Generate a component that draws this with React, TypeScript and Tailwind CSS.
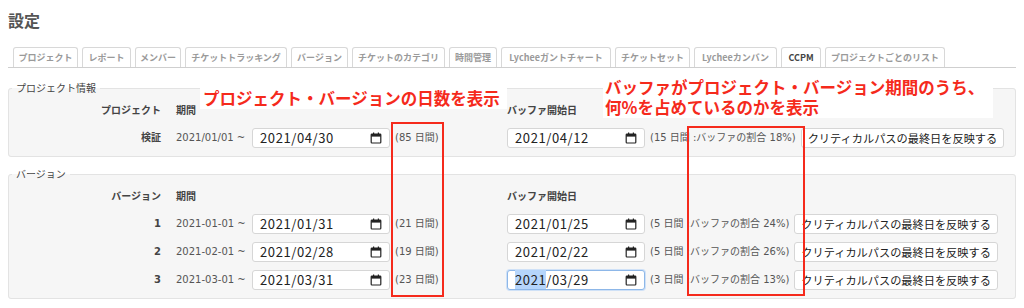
import React from "react";

const tabs = [
  { label: "プロジェクト", w: "w-[65px]" },
  { label: "レポート", w: "w-[49px]" },
  { label: "メンバー", w: "w-[46px]" },
  { label: "チケットトラッキング", w: "w-[102px]" },
  { label: "バージョン", w: "w-[57px]" },
  { label: "チケットのカテゴリ", w: "w-[93px]" },
  { label: "時間管理", w: "w-[48px]" },
  { label: "Lycheeガントチャート", w: "w-[110px]" },
  { label: "チケットセット", w: "w-[75px]" },
  { label: "Lycheeカンバン", w: "w-[83px]" },
  { label: "CCPM", w: "w-[40px]", active: true },
  { label: "プロジェクトごとのリスト", w: "w-[120px]" },
];

const versions = [
  { no: "1", from: "2021-01-01 ~", end: "2021/01/31", days: "(21 日間)", buf: "2021/01/25", ratio: "(5 日間 :バッファの割合 24%)" },
  { no: "2", from: "2021-02-01 ~", end: "2021/02/28", days: "(19 日間)", buf: "2021/02/22", ratio: "(5 日間 :バッファの割合 26%)" },
  { no: "3", from: "2021-03-01 ~", end: "2021/03/31", days: "(23 日間)", buf: "2021/03/29", ratio: "(3 日間 :バッファの割合 13%)", focused: true },
];

function CalendarIcon() {
  return (
    <svg width="12" height="12" viewBox="0 0 12 12" className="shrink-0">
      <rect x="1.2" y="2" width="9.6" height="9" rx="0.8" fill="none" stroke="#222" strokeWidth="1.2" />
      <rect x="1.2" y="2" width="9.6" height="2.6" fill="#222" />
      <line x1="3.6" y1="0.6" x2="3.6" y2="2.6" stroke="#222" strokeWidth="1.2" />
      <line x1="8.4" y1="0.6" x2="8.4" y2="2.6" stroke="#222" strokeWidth="1.2" />
    </svg>
  );
}

function DateBox({ value, focused }: { value: string; focused?: boolean }) {
  const [y, ...rest] = value.split("/");
  return (
    <div
      className={`flex h-[20px] w-[138px] shrink-0 items-center justify-between rounded-[3px] border bg-white pl-[7px] pr-[7px] font-['Noto_Sans_CJK_JP',sans-serif] ${
        focused ? "border-[#8db7e8] shadow-[0_0_0_1px_#cfe1f7]" : "border-[#d6d6d6]"
      }`}
    >
      <span className="text-[13px] leading-[18px] tracking-[0.6px] text-[#222]">
        {focused ? <span className="bg-[#b5d5fb]">{y}</span> : y}
        {"/" + rest.join("/")}
      </span>
      <CalendarIcon />
    </div>
  );
}

function ReflectButton() {
  return (
    <button className="ml-[5px] h-[20px] shrink-0 rounded-[3px] border border-[#d6d6d6] bg-white px-[6px] font-['Noto_Sans_CJK_JP',sans-serif] text-[11.2px] leading-[18px] text-[#222]">
      クリティカルパスの最終日を反映する
    </button>
  );
}

function HeaderRow({ label }: { label: string }) {
  return (
    <div className="flex h-[22px] items-center text-[10px] font-bold leading-[14px] text-[#444]">
      <div className="w-[152px] text-right">{label}</div>
      <div className="ml-[15px] w-[331px]">期間</div>
      <div>バッファ開始日</div>
    </div>
  );
}

function DataRow(props: {
  label: string;
  from: string;
  end: string;
  days: string;
  buf: string;
  ratio: string;
  focused?: boolean;
}) {
  return (
    <div className="flex h-[28px] items-center text-[10px] leading-[14px]">
      <div className="w-[152px] text-right font-bold text-[#444]">{props.label}</div>
      <div className="ml-[15px] flex w-[331px] items-center">
        <span className="w-[76px] shrink-0 whitespace-nowrap text-[#555]">{props.from}</span>
        <DateBox value={props.end} />
        <span className="ml-[5px] whitespace-nowrap text-[#555]">{props.days}</span>
      </div>
      <div className="flex items-center">
        <DateBox value={props.buf} focused={props.focused} />
        <span className="ml-[5px] whitespace-nowrap text-[#555]">{props.ratio}</span>
        <ReflectButton />
      </div>
    </div>
  );
}

export default function App() {
  return (
    <div className="relative h-[308px] w-[1024px] overflow-hidden bg-white px-2 font-['DejaVu_Sans','Noto_Sans_CJK_JP',sans-serif]">
      <h2 className="pt-[10px] font-['Noto_Sans_CJK_JP',sans-serif] text-[16px] font-bold leading-[20px] text-[#555]">設定</h2>

      {/* tabs */}
      <div className="mt-[17px] flex gap-[4px] border-b border-[#cfcfcf] pl-[5px] font-['Noto_Sans_CJK_JP',sans-serif]">
        {tabs.map((t) => (
          <div
            key={t.label}
            className={`flex h-[20px] ${t.w} items-center justify-center overflow-hidden rounded-t-[3px] border border-b-0 border-[#d8d8d8] bg-white text-[9px] font-bold leading-[12px] whitespace-nowrap ${
              t.active ? "text-[#444]" : "text-[#9a9a9a]"
            }`}
          >
            {t.label}
          </div>
        ))}
      </div>

      <fieldset className="mt-[12px] rounded-[3px] border border-[#e3e3e3] bg-[#f6f6f6] pb-[4px]">
        <legend className="ml-[3px] px-[4px] font-['Noto_Sans_CJK_JP',sans-serif] text-[10px] leading-[16px] text-[#444]">プロジェクト情報</legend>
        <div className="pt-[4px]">
          <HeaderRow label="プロジェクト" />
          <div className="mt-[2px]">
            <DataRow
              label="検証"
              from="2021/01/01 ~"
              end="2021/04/30"
              days="(85 日間)"
              buf="2021/04/12"
              ratio="(15 日間 :バッファの割合 18%)"
            />
          </div>
        </div>
      </fieldset>

      <fieldset className="mt-[9px] rounded-[3px] border border-[#e3e3e3] bg-[#f6f6f6] pb-[4px]">
        <legend className="ml-[3px] px-[4px] font-['Noto_Sans_CJK_JP',sans-serif] text-[10px] leading-[16px] text-[#444]">バージョン</legend>
        <div className="pt-[4px]">
          <HeaderRow label="バージョン" />
          <div className="mt-[2px]">
            {versions.map((v) => (
              <DataRow
                key={v.no}
                label={v.no}
                from={v.from}
                end={v.end}
                days={v.days}
                buf={v.buf}
                ratio={v.ratio}
                focused={v.focused}
              />
            ))}
          </div>
        </div>
      </fieldset>

      {/* annotations */}
      <div className="absolute left-[200px] top-[86px] flex h-[23px] w-[307px] items-center whitespace-nowrap bg-white pl-[3px] font-['Noto_Sans_CJK_JP',sans-serif] text-[16.5px] font-bold leading-[20px] text-[#f52a1c]">
        プロジェクト・バージョンの日数を表示
      </div>
      <div className="absolute left-[603px] top-[77px] h-[41px] w-[390px] whitespace-nowrap bg-white pl-[2px] font-['Noto_Sans_CJK_JP',sans-serif] text-[16.5px] font-bold leading-[20px] text-[#f52a1c]">
        <div>バッファがプロジェクト・バージョン期間のうち、</div>
        <div>何%を占めているのかを表示</div>
      </div>
      <div className="absolute left-[391px] top-[122px] h-[175px] w-[53px] border-2 border-[#f52a1c]" />
      <div className="absolute left-[687px] top-[126px] h-[170px] w-[118px] border-2 border-[#f52a1c]" />
    </div>
  );
}
